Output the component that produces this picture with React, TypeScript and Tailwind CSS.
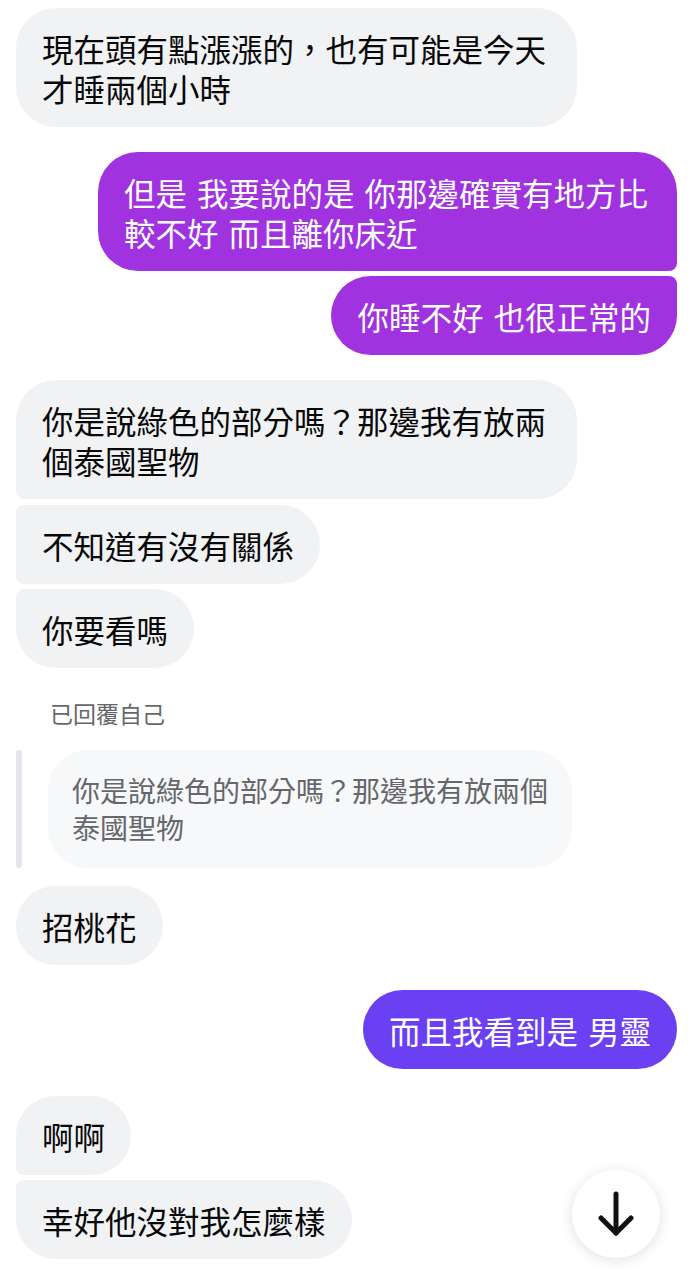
import React from "react";

type Side = "left" | "right";

interface Msg {
  side: Side;
  text: string;
  corners: string;
  gap: string;
  tone?: "magenta" | "violet";
}

const messages: Msg[] = [
  { side: "left", text: "現在頭有點漲漲的，也有可能是今天才睡兩個小時", corners: "rounded-[40px]", gap: "mt-2" },
  { side: "right", text: "但是 我要說的是 你那邊確實有地方比較不好 而且離你床近", corners: "rounded-[40px] rounded-br-[8px]", gap: "mt-[25px]", tone: "magenta" },
  { side: "right", text: "你睡不好 也很正常的", corners: "rounded-[40px] rounded-tr-[8px]", gap: "mt-[5px]", tone: "magenta" },
  { side: "left", text: "你是說綠色的部分嗎？那邊我有放兩個泰國聖物", corners: "rounded-[40px] rounded-bl-[8px]", gap: "mt-[25px]" },
  { side: "left", text: "不知道有沒有關係", corners: "rounded-[40px] rounded-l-[8px]", gap: "mt-[6px]" },
  { side: "left", text: "你要看嗎", corners: "rounded-[40px] rounded-tl-[8px]", gap: "mt-[5px]" },
];

const later: Msg[] = [
  { side: "left", text: "招桃花", corners: "rounded-[40px]", gap: "mt-[18px]" },
  { side: "right", text: "而且我看到是 男靈", corners: "rounded-[40px]", gap: "mt-[25px]", tone: "violet" },
  { side: "left", text: "啊啊", corners: "rounded-[40px] rounded-bl-[8px]", gap: "mt-[27px]" },
  { side: "left", text: "幸好他沒對我怎麼樣", corners: "rounded-[40px] rounded-tl-[8px]", gap: "mt-[5px]" },
];

const Bubble = ({ side, text, corners, gap, tone }: Msg) => {
  const color =
    side === "left"
      ? "bg-[#f1f2f4] text-[#080809] max-w-[561px]"
      : tone === "violet"
      ? "bg-[#6b40f3] text-white max-w-[579px]"
      : "bg-[#a033df] text-white max-w-[579px]";
  return (
    <div className={`flex ${side === "right" ? "justify-end" : "justify-start"} ${gap}`}>
      <div className={`${color} ${corners} px-[26px] pt-[20px] pb-[19px] text-[31.5px] leading-[40px] [word-spacing:3px]`}>
        {text}
      </div>
    </div>
  );
};

const ArrowDown = () => (
  <svg width="36" height="46" viewBox="0 0 36 46" fill="none" stroke="#111111" strokeWidth="5" strokeLinecap="round" strokeLinejoin="round">
    <path d="M18 3v39" />
    <path d="M3 27l15 15 15-15" />
  </svg>
);

export default function App() {
  return (
    <div
      className="relative w-[693px] h-[1280px] overflow-hidden bg-white px-4"
      style={{ fontFamily: '"Noto Sans CJK TC", "Noto Sans", sans-serif' }}
    >
      {messages.map((m, i) => (
        <Bubble key={i} {...m} />
      ))}

      {/* reply to self */}
      <div className="mt-[30px] ml-[34px] text-[23px] leading-[30px] text-[#65676b]">已回覆自己</div>
      <div className="mt-[22px] flex items-stretch gap-[26px]">
        <div className="w-[6px] rounded-full bg-[#e4e6eb]" />
        <div className="w-[524px] rounded-[40px] bg-[#f7f8fa] px-[24px] py-[22px] text-[28px] leading-[37px] text-[#65676b]">
          你是說綠色的部分嗎？那邊我有放兩個泰國聖物
        </div>
      </div>

      {later.map((m, i) => (
        <Bubble key={i} {...m} />
      ))}

      <button className="absolute left-[572px] top-[1170px] flex h-[88px] w-[88px] items-center justify-center rounded-full bg-white shadow-[0_2px_14px_rgba(0,0,0,0.12)]">
        <ArrowDown />
      </button>
    </div>
  );
}
